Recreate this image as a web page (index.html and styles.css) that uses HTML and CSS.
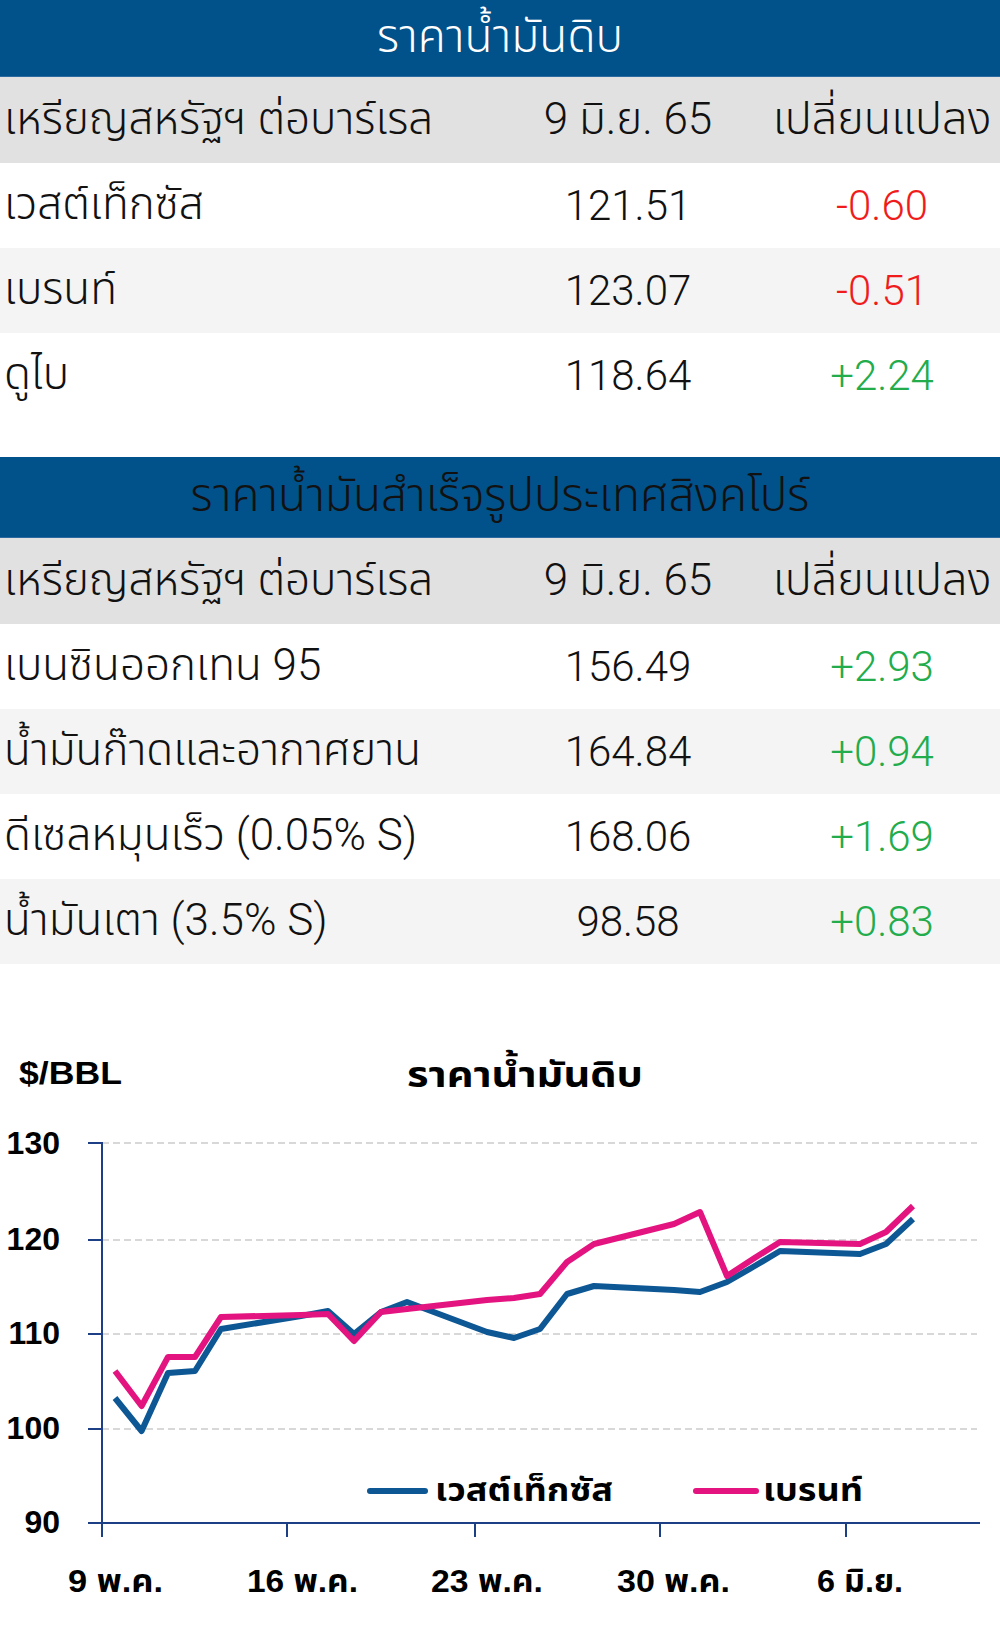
FILE: index.html
```html
<!DOCTYPE html>
<html lang="th">

<head>
	<meta charset="UTF-8">
	<meta name="viewport" content="width=device-width, initial-scale=1.0">
	<title>ราคาน้ำมัน</title>
	<link rel="stylesheet" href="styles.css">
</head>

<body>
	<!-- Crude oil -->
	<section class="board board-crude">
		<div class="banner">ราคาน้ำมันดิบ</div>
		<div class="row row-head">
			<span class="name">เหรียญสหรัฐฯ ต่อบาร์เรล</span>
			<span class="price">9 มิ.ย. 65</span>
			<span class="change">เปลี่ยนแปลง</span>
		</div>
		<div class="row">
			<span class="name">เวสต์เท็กซัส</span>
			<span class="price">121.51</span>
			<span class="change down">-0.60</span>
		</div>
		<div class="row">
			<span class="name">เบรนท์</span>
			<span class="price">123.07</span>
			<span class="change down">-0.51</span>
		</div>
		<div class="row">
			<span class="name">ดูไบ</span>
			<span class="price">118.64</span>
			<span class="change up">+2.24</span>
		</div>
	</section>

	<!-- Singapore refined products -->
	<section class="board board-refined">
		<div class="banner banner-dark">ราคาน้ำมันสำเร็จรูปประเทศสิงคโปร์</div>
		<div class="row row-head">
			<span class="name">เหรียญสหรัฐฯ ต่อบาร์เรล</span>
			<span class="price">9 มิ.ย. 65</span>
			<span class="change">เปลี่ยนแปลง</span>
		</div>
		<div class="row">
			<span class="name">เบนซินออกเทน 95</span>
			<span class="price">156.49</span>
			<span class="change up">+2.93</span>
		</div>
		<div class="row">
			<span class="name">น้ำมันก๊าดและอากาศยาน</span>
			<span class="price">164.84</span>
			<span class="change up">+0.94</span>
		</div>
		<div class="row">
			<span class="name">ดีเซลหมุนเร็ว (0.05% S)</span>
			<span class="price">168.06</span>
			<span class="change up">+1.69</span>
		</div>
		<div class="row">
			<span class="name">น้ำมันเตา (3.5% S)</span>
			<span class="price">98.58</span>
			<span class="change up">+0.83</span>
		</div>
	</section>

	<!-- Chart -->
	<section class="chart">
		<svg class="chart-svg" width="1000" height="670" viewBox="0 0 1000 670">
			<text class="unit" x="19" y="120" textLength="103" lengthAdjust="spacingAndGlyphs">$/BBL</text>
			<text class="chart-title" x="407" y="123" textLength="236" lengthAdjust="spacingAndGlyphs">ราคาน้ำมันดิบ</text>

			<g class="grid">
				<line x1="102" y1="179" x2="977" y2="179" />
				<line x1="102" y1="276" x2="977" y2="276" />
				<line x1="102" y1="370" x2="977" y2="370" />
				<line x1="102" y1="465" x2="977" y2="465" />
			</g>

			<g class="y-labels">
				<text x="60" y="190">130</text>
				<text x="60" y="286">120</text>
				<text x="60" y="380">110</text>
				<text x="60" y="475">100</text>
				<text x="60" y="569">90</text>
			</g>

			<g class="axis">
				<line x1="102" y1="178" x2="102" y2="573" />
				<line x1="88" y1="559" x2="980" y2="559" />
				<line x1="88" y1="179" x2="102" y2="179" />
				<line x1="88" y1="276" x2="102" y2="276" />
				<line x1="88" y1="370" x2="102" y2="370" />
				<line x1="88" y1="465" x2="102" y2="465" />
				<line x1="287" y1="559" x2="287" y2="573" />
				<line x1="475" y1="559" x2="475" y2="573" />
				<line x1="660" y1="559" x2="660" y2="573" />
				<line x1="846" y1="559" x2="846" y2="573" />
			</g>

			<polyline class="series series-wti" points="115,434 141.6,467 168,409 195,407 221,365 301,352 328,347 354,370 381,348 407,338 487,368 514,374 540,365 567,330 594,322 674,326 700,328 727,318 753,303 780,287 860,290 886,280 913,255" />
			<polyline class="series series-brent" points="115,407 141.6,442 168,393 195,393 221,353 301,351 328,350 354,377 381,348 407,345 487,336 514,334 540,330 567,298 594,280 674,260 700,248 727,312 753,295 780,278 860,280 886,268 913,242" />

			<line class="key key-wti" x1="370" y1="527" x2="425" y2="527" />
			<text class="key-label" x="435" y="537" textLength="178" lengthAdjust="spacingAndGlyphs">เวสต์เท็กซัส</text>
			<line class="key key-brent" x1="696" y1="527" x2="756" y2="527" />
			<text class="key-label" x="763" y="537" textLength="100" lengthAdjust="spacingAndGlyphs">เบรนท์</text>

			<g class="x-labels">
				<text x="68" y="628" textLength="95" lengthAdjust="spacingAndGlyphs">9 พ.ค.</text>
				<text x="247" y="628" textLength="111" lengthAdjust="spacingAndGlyphs">16 พ.ค.</text>
				<text x="431" y="628" textLength="112" lengthAdjust="spacingAndGlyphs">23 พ.ค.</text>
				<text x="617" y="628" textLength="113" lengthAdjust="spacingAndGlyphs">30 พ.ค.</text>
				<text x="817" y="628" textLength="86" lengthAdjust="spacingAndGlyphs">6 มิ.ย.</text>
			</g>
		</svg>
	</section>
</body>

</html>
```

FILE: styles.css
```css
body {
	margin: 0;
	padding: 0;
	width: 1000px;
	background-color: white;
	color: #111;
	font-family: Roboto, "Noto Sans Thai", "Noto Sans", sans-serif;
	font-weight: 300;
}

/* Price boards */
.board {
	display: flex;
	flex-direction: column;
}

.board-crude {
	margin-bottom: 39px;
}

.banner {
	height: 77px;
	display: flex;
	align-items: center;
	justify-content: center;
	background-color: #01518a;
	border-bottom: 1px solid #2a6aa0;
	box-sizing: border-box;
	color: white;
	font-size: 46px;
}

.banner-dark {
	height: 81px;
	color: #111;
}

.row {
	height: 85px;
	display: grid;
	grid-template-columns: 500px 256px 244px;
	align-items: center;
	font-size: 42px;
	background-color: white;
}

.row:nth-child(even) {
	background-color: #f4f4f4;
}

.row-head,
.row-head:nth-child(even) {
	height: 86px;
	background-color: #e1e1e1;
	font-size: 44px;
}

.name {
	padding-left: 4px;
	font-size: 44px;
	white-space: nowrap;
}

.price {
	text-align: center;
}

.change {
	text-align: center;
	padding-left: 8px;
	white-space: nowrap;
}

.row-head .change {
	font-size: 45px;
}

.down {
	color: #f01c1c;
}

.up {
	color: #22ac4c;
}

/* Chart */
.chart {
	height: 670px;
}

.chart-svg {
	display: block;
	font-family: "Liberation Sans", "Noto Sans Thai", sans-serif;
	font-weight: bold;
}

.unit {
	font-size: 31px;
}

.chart-title {
	font-size: 36px;
}

.grid line {
	stroke: #cbcbcb;
	stroke-width: 1.5;
	stroke-dasharray: 7 4;
}

.axis line {
	stroke: #1d3f86;
	stroke-width: 2;
}

.y-labels text {
	font-size: 32px;
	text-anchor: end;
}

.x-labels text {
	font-size: 31px;
}

.series {
	fill: none;
	stroke-width: 6;
	stroke-linejoin: round;
}

.series-wti {
	stroke: #0d5795;
}

.series-brent {
	stroke: #e3137f;
}

.key {
	stroke-width: 6;
	stroke-linecap: round;
}

.key-wti {
	stroke: #0d5795;
}

.key-brent {
	stroke: #e3137f;
}

.key-label {
	font-size: 32px;
}
```
